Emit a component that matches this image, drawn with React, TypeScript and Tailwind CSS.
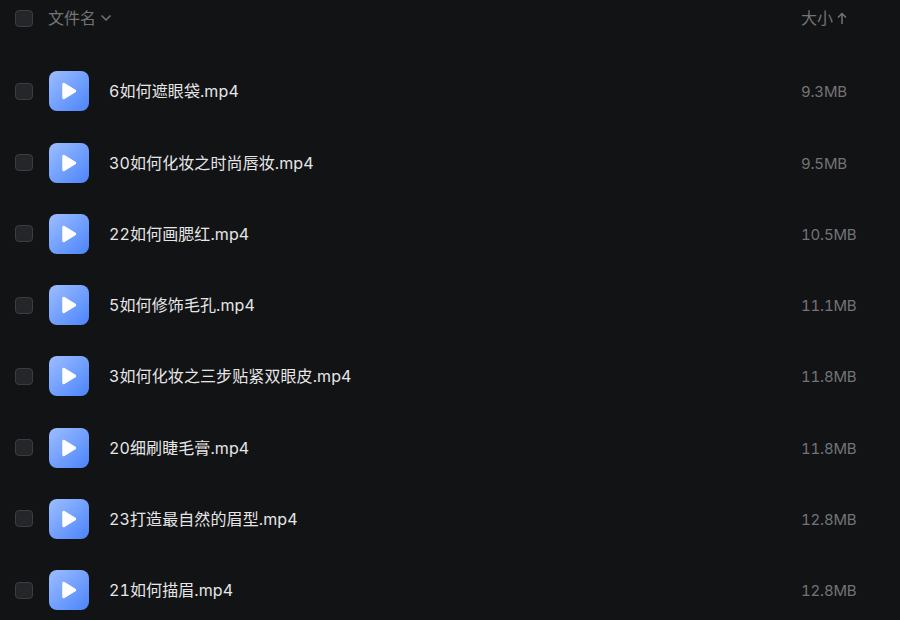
import React from "react";

const rows: [string, string][] = [
  ["6如何遮眼袋.mp4", "9.3MB"],
  ["30如何化妆之时尚唇妆.mp4", "9.5MB"],
  ["22如何画腮红.mp4", "10.5MB"],
  ["5如何修饰毛孔.mp4", "11.1MB"],
  ["3如何化妆之三步贴紧双眼皮.mp4", "11.8MB"],
  ["20细刷睫毛膏.mp4", "11.8MB"],
  ["23打造最自然的眉型.mp4", "12.8MB"],
  ["21如何描眉.mp4", "12.8MB"],
];

const Check = () => (
  <div className="w-[18px] h-[17px] shrink-0 rounded-[4px] border border-[#3c3d40] bg-[#25262a]" />
);

export default function App() {
  return (
    <div
      className="w-[900px] h-[620px] overflow-hidden bg-[#121315] pl-[15px]"
      style={{ fontFamily: 'Inter, "Noto Sans CJK SC", sans-serif' }}
    >
      <div className="flex items-center h-[36px] text-[16px] text-[#737477]">
        <Check />
        <span className="ml-[15px]">文件名</span>
        <svg width="12" height="12" viewBox="0 0 12 12" className="ml-[4px]" fill="none" stroke="#737477" strokeWidth="1.5">
          <path d="M1.5 3.5 6 8l4.5-4.5" />
        </svg>
        <span className="ml-auto w-[99px]">
          大小
          <svg width="12" height="13" viewBox="0 0 12 13" className="inline ml-[3px] align-[-1px]" fill="none" stroke="#737477" strokeWidth="1.5">
            <path d="M6 12V1.500M2 5.500l4-4 4 4" />
          </svg>
        </span>
      </div>
      <div className="pt-[19.775px]">
        {rows.map(([name, size]) => (
          <div key={name} className="flex items-center h-[71.25px]">
            <Check />
            <div className="ml-[16px] w-[40px] h-[40px] rounded-[8px] bg-gradient-to-br from-[#9dbdff] to-[#4b83fb] flex items-center justify-center">
              <svg width="18" height="20" viewBox="0 0 18 20">
                <path d="M3 3.200v13.600c0 .6.6.9 1.100.6l11-6.800c.4-.3.4-.9 0-1.200l-11-6.800C3.600 2.300 3 2.600 3 3.200z" fill="#fff" stroke="#fff" strokeWidth="1.500" strokeLinejoin="round" />
              </svg>
            </div>
            <span className="ml-[20px] text-[16px] tabular-nums tracking-[0.1px] text-[#e6e6e7] whitespace-nowrap">{name}</span>
            <span className="ml-auto w-[99px] pt-[2.5px] text-[15px] tabular-nums tracking-[-0.2px] text-[#737477]">{size}</span>
          </div>
        ))}
      </div>
    </div>
  );
}
